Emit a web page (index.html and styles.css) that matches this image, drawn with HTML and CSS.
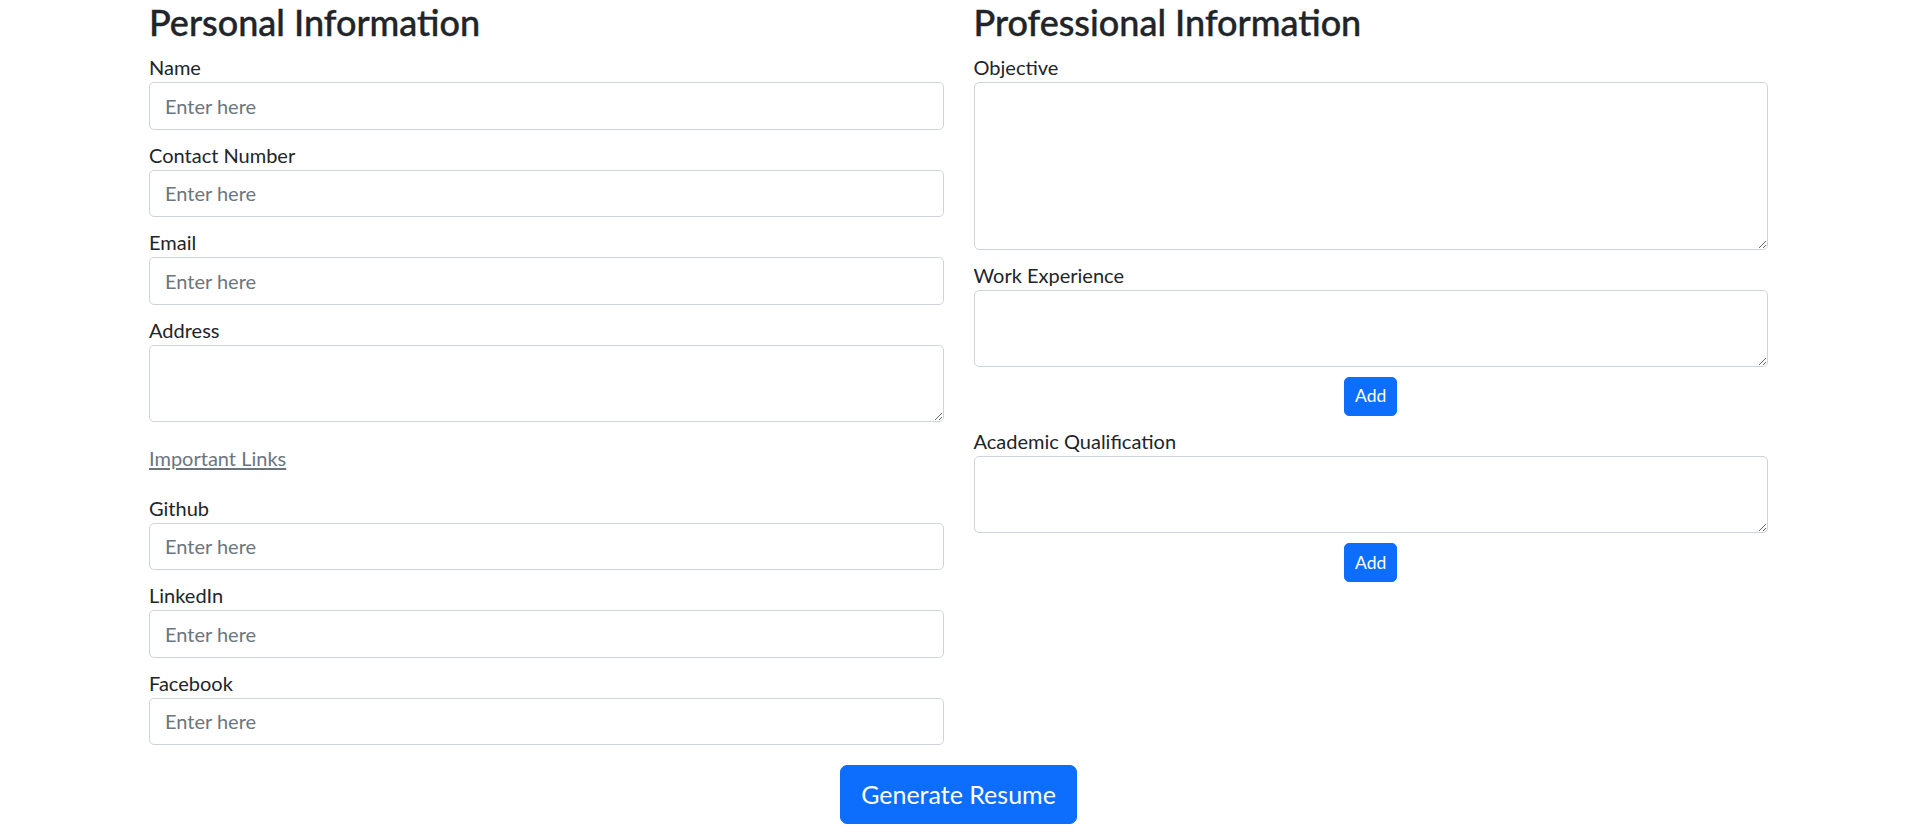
FILE: index.html
```html
<!DOCTYPE html>
<html lang="en">
<head>
<meta charset="utf-8">
<title>Resume Generator</title>
<link rel="stylesheet" href="styles.css">
</head>
<body>
<div class="page">
  <div class="row">
    <section class="col">
      <h3 class="title">Personal Information</h3>
      <div class="group">
        <label class="label" for="name">Name</label>
        <input class="control" id="name" type="text" placeholder="Enter here">
      </div>
      <div class="group">
        <label class="label" for="contact">Contact Number</label>
        <input class="control" id="contact" type="text" placeholder="Enter here">
      </div>
      <div class="group">
        <label class="label" for="email">Email</label>
        <input class="control" id="email" type="text" placeholder="Enter here">
      </div>
      <div class="group">
        <label class="label" for="address">Address</label>
        <textarea class="control area" id="address" rows="2"></textarea>
      </div>
      <p class="links"><a class="link" href="#">Important Links</a></p>
      <div class="group">
        <label class="label" for="github">Github</label>
        <input class="control" id="github" type="text" placeholder="Enter here">
      </div>
      <div class="group">
        <label class="label" for="linkedin">LinkedIn</label>
        <input class="control" id="linkedin" type="text" placeholder="Enter here">
      </div>
      <div class="group">
        <label class="label" for="facebook">Facebook</label>
        <input class="control" id="facebook" type="text" placeholder="Enter here">
      </div>
    </section>
    <section class="col">
      <h3 class="title">Professional Information</h3>
      <div class="group">
        <label class="label" for="objective">Objective</label>
        <textarea class="control area area-lg" id="objective" rows="5"></textarea>
      </div>
      <div class="group">
        <label class="label" for="work">Work Experience</label>
        <textarea class="control area" id="work" rows="2"></textarea>
      </div>
      <div class="add-row"><button class="btn btn-sm" type="button">Add</button></div>
      <div class="group">
        <label class="label" for="academic">Academic Qualification</label>
        <textarea class="control area" id="academic" rows="2"></textarea>
      </div>
      <div class="add-row"><button class="btn btn-sm" type="button">Add</button></div>
    </section>
  </div>
  <div class="submit-row"><button class="btn btn-lg" type="button">Generate Resume</button></div>
</div>
</body>
</html>
```
FILE: styles.css
```css
html, body {
  margin: 0;
  background: #fff;
}
body {
  font-family: "Lato", "Noto Sans", sans-serif;
  font-size: 20px;
  line-height: 1.5;
  color: #212529;
}
.page {
  padding: 0 143px 0 149px;
}
.row {
  display: grid;
  grid-template-columns: 1fr 1fr;
  column-gap: 30px;
  align-items: start;
}
.title {
  font-size: 36px;
  font-weight: 500;
  line-height: 42px;
  margin: 1px 0 9px;
  color: #212529;
  -webkit-text-stroke: 0.4px #212529;
}
.group {
  margin-bottom: 10px;
}
.label {
  display: block;
  line-height: 30px;
  height: 30px;
}
.control {
  display: block;
  box-sizing: border-box;
  width: 100%;
  height: 47.5px;
  margin: 0;
  padding: 0 15px;
  font: inherit;
  font-size: 20px;
  line-height: 30px;
  color: #212529;
  background: #fff;
  border: 1.25px solid #ced4da;
  border-radius: 5px;
  outline: none;
}
.control::placeholder {
  color: #6c757d;
  opacity: 1;
}
.area {
  height: 77.5px;
  padding: 7.5px 15px;
  resize: vertical;
}
.area-lg {
  height: 167.5px;
}
.links {
  margin: 0;
  padding: 11px 0 19.5px;
  line-height: 30px;
}
.link {
  color: #6c757d;
  text-decoration: underline;
  text-underline-offset: 2px;
}
.add-row {
  display: flex;
  justify-content: center;
  margin-bottom: 10px;
}
.btn {
  font-family: inherit;
  color: #fff;
  background: #0d6efd;
  border: 1.25px solid #0d6efd;
  box-sizing: border-box;
  cursor: pointer;
}
.btn-sm {
  height: 38.75px;
  padding: 0 10px;
  font-size: 17.5px;
  line-height: 26px;
  border-radius: 5px;
}
.btn-lg {
  height: 59.5px;
  padding: 0 20px;
  font-size: 25px;
  line-height: 37px;
  border-radius: 7px;
}
.submit-row {
  display: flex;
  justify-content: center;
  margin-top: 9.5px;
}
```
